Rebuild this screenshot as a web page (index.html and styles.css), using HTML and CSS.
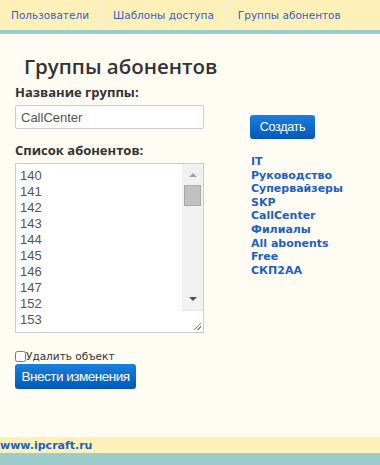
FILE: index.html
```html
<!DOCTYPE html>
<html lang="ru">
<head>
  <meta charset="UTF-8">
  <title>Группы абонентов</title>
  <link rel="stylesheet" href="styles.css">
</head>
<body>

<nav class="topnav">
  <a href="#">Пользователи</a>
  <a href="#">Шаблоны доступа</a>
  <a href="#">Группы абонентов</a>
</nav>

<div class="content">
  <h1>Группы абонентов</h1>

  <div class="columns">
    <div class="form-col">
      <label class="field-label">Название группы:</label>
      <input type="text" class="text-input" value="CallCenter">

      <label class="field-label list-label">Список абонентов:</label>
      <div class="listbox">
        <div class="list-items">
          <div>140</div>
          <div>141</div>
          <div>142</div>
          <div>143</div>
          <div>144</div>
          <div>145</div>
          <div>146</div>
          <div>147</div>
          <div>152</div>
          <div>153</div>
        </div>
        <div class="scrollbar">
          <div class="track">
            <span class="arrow-up"></span>
            <span class="thumb"></span>
            <span class="spacer"></span>
            <span class="arrow-down"></span>
          </div>
          <div class="corner"><span class="grip"></span></div>
        </div>
      </div>

      <label class="delete-row"><input type="checkbox"><span>Удалить объект</span></label>
      <button class="btn btn-save">Внести изменения</button>
    </div>

    <div class="side-col">
      <button class="btn btn-create">Создать</button>
      <ul class="groups">
        <li><a href="#">IT</a></li>
        <li><a href="#">Руководство</a></li>
        <li><a href="#">Супервайзеры</a></li>
        <li><a href="#">SKP</a></li>
        <li><a href="#">CallCenter</a></li>
        <li><a href="#">Филиалы</a></li>
        <li><a href="#">All abonents</a></li>
        <li><a href="#">Free</a></li>
        <li><a href="#">СКП2АА</a></li>
      </ul>
    </div>
  </div>
</div>

<footer class="footer">
  <a href="#">www.ipcraft.ru</a>
</footer>

</body>
</html>
```

FILE: styles.css
```css
body {
  margin: 0;
  background: #fffcf3;
  font-family: "DejaVu Sans", Verdana, sans-serif;
  font-size: 12px;
  color: #333;
  height: 465px;
  display: flex;
  flex-direction: column;
}
.topnav {
  display: flex;
  height: 30px;
  background: #fdf1b9;
  border-bottom: 4px solid #9dcdcb;
}
.topnav a {
  display: flex;
  align-items: center;
  padding: 0 11px 1px;
  color: #3b5bcf;
  text-decoration: none;
  font-size: 10.5px;
  border-right: 2px solid #f4efdc;
}
.topnav a:last-child {
  border-right: none;
}
.content {
  flex: 1;
  padding: 0 15px;
}
h1 {
  font-family: "Open Sans", Arial, sans-serif;
  font-size: 20.5px;
  font-weight: 600;
  color: #333;
  margin: 18px 0 3px 9px;
  line-height: 28px;
}
.columns {
  display: flex;
}
.form-col {
  width: 189px;
  display: flex;
  flex-direction: column;
}
.field-label {
  font-family: "Open Sans", Arial, sans-serif;
  font-weight: bold;
  font-size: 13px;
  color: #333;
  line-height: 18px;
  margin-bottom: 4px;
}
.list-label {
  margin-top: 12px;
}
.text-input {
  box-sizing: border-box;
  width: 189px;
  height: 24px;
  border: 1px solid #ccc;
  border-radius: 2px;
  padding: 0 5px;
  font-family: "Liberation Sans", Arial, sans-serif;
  font-size: 13px;
  color: #555;
  background: white;
}
.listbox {
  box-sizing: border-box;
  width: 189px;
  height: 170px;
  border: 1px solid #ccc;
  background: white;
  display: flex;
}
.list-items {
  flex: 1;
  padding: 4px 4px 0;
  overflow: hidden;
  font-family: "Liberation Sans", Arial, sans-serif;
  font-size: 13px;
  line-height: 16px;
  color: #555;
}
.scrollbar {
  width: 21px;
  display: flex;
  flex-direction: column;
}
.track {
  flex: 1;
  background: #f1f1f1;
  display: flex;
  flex-direction: column;
  align-items: center;
}
.arrow-up {
  margin-top: 9px;
  border-left: 4px solid transparent;
  border-right: 4px solid transparent;
  border-bottom: 4px solid #a3a3a3;
}
.thumb {
  margin-top: 8px;
  box-sizing: border-box;
  width: 17px;
  height: 21px;
  background: #c1c1c1;
  border: 1px solid #a9a9a9;
}
.spacer {
  flex: 1;
}
.arrow-down {
  margin-bottom: 9px;
  border-left: 4px solid transparent;
  border-right: 4px solid transparent;
  border-top: 4px solid #505050;
}
.corner {
  height: 21px;
  border-top: 1px solid #e3e3e3;
  background: white;
  display: flex;
  justify-content: flex-end;
  align-items: flex-end;
}
.grip {
  width: 7px;
  height: 7px;
  margin: 0 2px 2px 0;
  background: linear-gradient(135deg, transparent 45%, #888 45%, #888 55%, transparent 55%, transparent 70%, #888 70%, #888 80%, transparent 80%);
}
.delete-row {
  display: flex;
  align-items: center;
  margin-top: 17px;
  font-size: 10.5px;
  color: #333;
}
.delete-row input {
  margin: 0;
  width: 11px;
  height: 11px;
}
.btn {
  font-family: "Liberation Sans", Arial, sans-serif;
  color: white;
  border: none;
  border-radius: 3px;
  background: linear-gradient(to bottom, #1b7fdd, #0258b8);
  cursor: pointer;
}
.btn-save {
  margin-top: 2px;
  width: 121px;
  height: 25px;
  font-size: 13.5px;
  letter-spacing: -0.5px;
  padding: 0;
}
.side-col {
  margin-left: 46px;
  margin-top: 32px;
}
.btn-create {
  width: 65px;
  height: 24px;
  font-size: 12.5px;
  letter-spacing: -0.3px;
  padding: 0;
}
.groups {
  list-style: none;
  margin: 16px 0 0;
  padding: 0 0 0 1px;
}
.groups li {
  line-height: 12.6px;
}
.groups a {
  font-weight: bold;
  font-size: 11px;
  color: #1d5fcb;
  text-decoration: none;
}
.footer {
  height: 16px;
  background: #fdf1b9;
  border-bottom: 12px solid #9dcdcb;
  display: flex;
  align-items: center;
}
.footer a {
  font-weight: bold;
  font-size: 11px;
  color: #1d5fcb;
  text-decoration: none;
}
```
